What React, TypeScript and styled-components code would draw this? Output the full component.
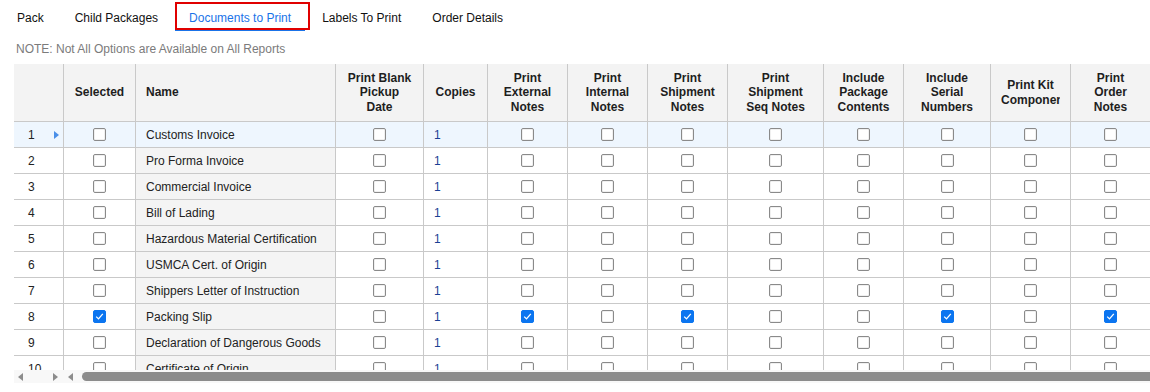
import styled, { createGlobalStyle } from "styled-components";

const GlobalStyle = createGlobalStyle`
  html, body {
    margin: 0;
    padding: 0;
    background: #ffffff;
    font-family: "Liberation Sans", Arial, sans-serif;
  }
`;

const COLS = "50px 72px 200px 88px 64px 80px 80px 80px 96px 80px 87px 80px 80px";

const Page = styled.div`
  width: 1150px;
  height: 392px;
  overflow: hidden;
  font-size: 12px;
  color: #222;
`;

const TabBar = styled.div`
  display: flex;
  gap: 3px;
  padding: 3px 0 0 3px;
`;

const Tab = styled.div<{ $active?: boolean }>`
  position: relative;
  padding: 8px 14px 4px;
  line-height: 14px;
  white-space: nowrap;
  color: ${(p) => (p.$active ? "#1a73e8" : "#111")};
  border-bottom: 2px solid ${(p) => (p.$active ? "#1a73e8" : "transparent")};

  ${(p) =>
    p.$active &&
    `
    &::after {
      content: "";
      position: absolute;
      top: -1px;
      left: 0;
      right: -5px;
      bottom: -1px;
      border: 2px solid #e00000;
    }
  `}
`;

const Note = styled.div`
  margin: 11px 0 8px 16px;
  line-height: 14px;
  color: #7b7b7b;
`;

const GridWrap = styled.div`
  margin-left: 14px;
  width: 1136px;
  height: 306px;
  overflow: hidden;
`;

const Row = styled.div`
  display: grid;
  grid-template-columns: ${COLS};
  width: 1137px;
`;

const HeadCell = styled.div<{ $left?: boolean }>`
  box-sizing: border-box;
  height: 58px;
  background: #f3f3f3;
  border-right: 1px solid #c9c9c9;
  border-bottom: 1px solid #c9c9c9;
  display: flex;
  align-items: center;
  justify-content: ${(p) => (p.$left ? "flex-start" : "center")};
  font-weight: bold;
  color: #1e1e1e;
`;

const HeadLabel = styled.div<{ $left?: boolean }>`
  margin: 0 10px;
  overflow: hidden;
  text-align: ${(p) => (p.$left ? "left" : "center")};
  line-height: 14.5px;
  width: ${(p) => (p.$left ? "auto" : "100%")};
`;

const Cell = styled.div<{ $current?: boolean; $shade?: boolean; $center?: boolean }>`
  box-sizing: border-box;
  height: 26px;
  border-right: 1px solid #c9c9c9;
  border-bottom: 1px solid #c9c9c9;
  background: ${(p) => (p.$current ? "#eef6fe" : p.$shade ? "#f4f4f4" : "#ffffff")};
  display: flex;
  align-items: center;
  justify-content: ${(p) => (p.$center ? "center" : "flex-start")};
  padding: 0 10px;
  white-space: nowrap;
  overflow: hidden;
`;

const NumCell = styled(Cell)`
  padding: 0 0 0 14px;
  justify-content: space-between;
`;

const CurrentMark = styled.span`
  width: 0;
  height: 0;
  margin-right: 4px;
  border-top: 4px solid transparent;
  border-bottom: 4px solid transparent;
  border-left: 5px solid #4a8fe8;
`;

const Copies = styled.span`
  color: #1b3f94;
`;

const Box = styled.span<{ $on?: boolean }>`
  box-sizing: border-box;
  width: 13px;
  height: 13px;
  border-radius: 2px;
  border: 1px solid ${(p) => (p.$on ? "#0b75f0" : "#8a8a8a")};
  background: ${(p) => (p.$on ? "#0b75f0" : "#ffffff")};
  box-shadow: ${(p) => (p.$on ? "none" : "inset 0 0 0 1px #f0f0f0")};
  display: flex;
  align-items: center;
  justify-content: center;
`;

const CheckBox = ({ on }: { on?: boolean }) => (
  <Box $on={on} role="checkbox" aria-checked={!!on}>
    {on && (
      <svg width="9" height="9" viewBox="0 0 9 9">
        <path d="M1.2 4.6 L3.5 6.9 L7.8 1.8" fill="none" stroke="#fff" strokeWidth="1.3" />
      </svg>
    )}
  </Box>
);

const ScrollRow = styled.div`
  margin-left: 14px;
  height: 13px;
  background: #f8f8f8;
  display: flex;
  align-items: center;
`;

const Arrow = styled.span<{ $dir: "left" | "right"; $gap: number }>`
  width: 0;
  height: 0;
  margin-left: ${(p) => p.$gap}px;
  border-top: 4px solid transparent;
  border-bottom: 4px solid transparent;
  ${(p) =>
    p.$dir === "left"
      ? "border-right: 5px solid #8c8c8c;"
      : "border-left: 5px solid #8c8c8c;"}
`;

const Thumb = styled.div`
  flex: 1;
  height: 9px;
  margin-left: 9px;
  background: #8c8c8c;
  border-radius: 5px 0 0 5px;
`;

const headers = [
  "",
  "Selected",
  "Name",
  "Print Blank Pickup Date",
  "Copies",
  "Print External Notes",
  "Print Internal Notes",
  "Print Shipment Notes",
  "Print Shipment Seq Notes",
  "Include Package Contents",
  "Include Serial Numbers",
  "Print Kit Components",
  "Print Order Notes",
];

type Doc = {
  name: string;
  selected?: boolean;
  ext?: boolean;
  ship?: boolean;
  serial?: boolean;
  order?: boolean;
};

const docs: Doc[] = [
  { name: "Customs Invoice" },
  { name: "Pro Forma Invoice" },
  { name: "Commercial Invoice" },
  { name: "Bill of Lading" },
  { name: "Hazardous Material Certification" },
  { name: "USMCA Cert. of Origin" },
  { name: "Shippers Letter of Instruction" },
  { name: "Packing Slip", selected: true, ext: true, ship: true, serial: true, order: true },
  { name: "Declaration of Dangerous Goods" },
  { name: "Certificate of Origin" },
];

const tabs = ["Pack", "Child Packages", "Documents to Print", "Labels To Print", "Order Details"];

export default function App() {
  return (
    <Page>
      <GlobalStyle />
      <TabBar>
        {tabs.map((t) => (
          <Tab key={t} $active={t === "Documents to Print"}>
            {t}
          </Tab>
        ))}
      </TabBar>
      <Note>NOTE: Not All Options are Available on All Reports</Note>
      <GridWrap>
        <Row>
          {headers.map((h, i) => (
            <HeadCell key={i} $left={h === "Name"}>
              {h && <HeadLabel $left={h === "Name"}>{h}</HeadLabel>}
            </HeadCell>
          ))}
        </Row>
        {docs.map((d, i) => {
          const cur = i === 0;
          const flags = [d.ext, false, d.ship, false, false, d.serial, false, d.order];
          return (
            <Row key={d.name}>
              <NumCell $current={cur}>
                <span>{i + 1}</span>
                {cur && <CurrentMark />}
              </NumCell>
              <Cell $current={cur} $center>
                <CheckBox on={d.selected} />
              </Cell>
              <Cell $current={cur} $shade>
                {d.name}
              </Cell>
              <Cell $current={cur} $center>
                <CheckBox />
              </Cell>
              <Cell $current={cur}>
                <Copies>1</Copies>
              </Cell>
              {flags.map((f, j) => (
                <Cell key={j} $current={cur} $center>
                  <CheckBox on={f} />
                </Cell>
              ))}
            </Row>
          );
        })}
      </GridWrap>
      <ScrollRow>
        <Arrow $dir="left" $gap={4} />
        <Arrow $dir="right" $gap={30} />
        <Arrow $dir="left" $gap={10} />
        <Thumb />
      </ScrollRow>
    </Page>
  );
}
